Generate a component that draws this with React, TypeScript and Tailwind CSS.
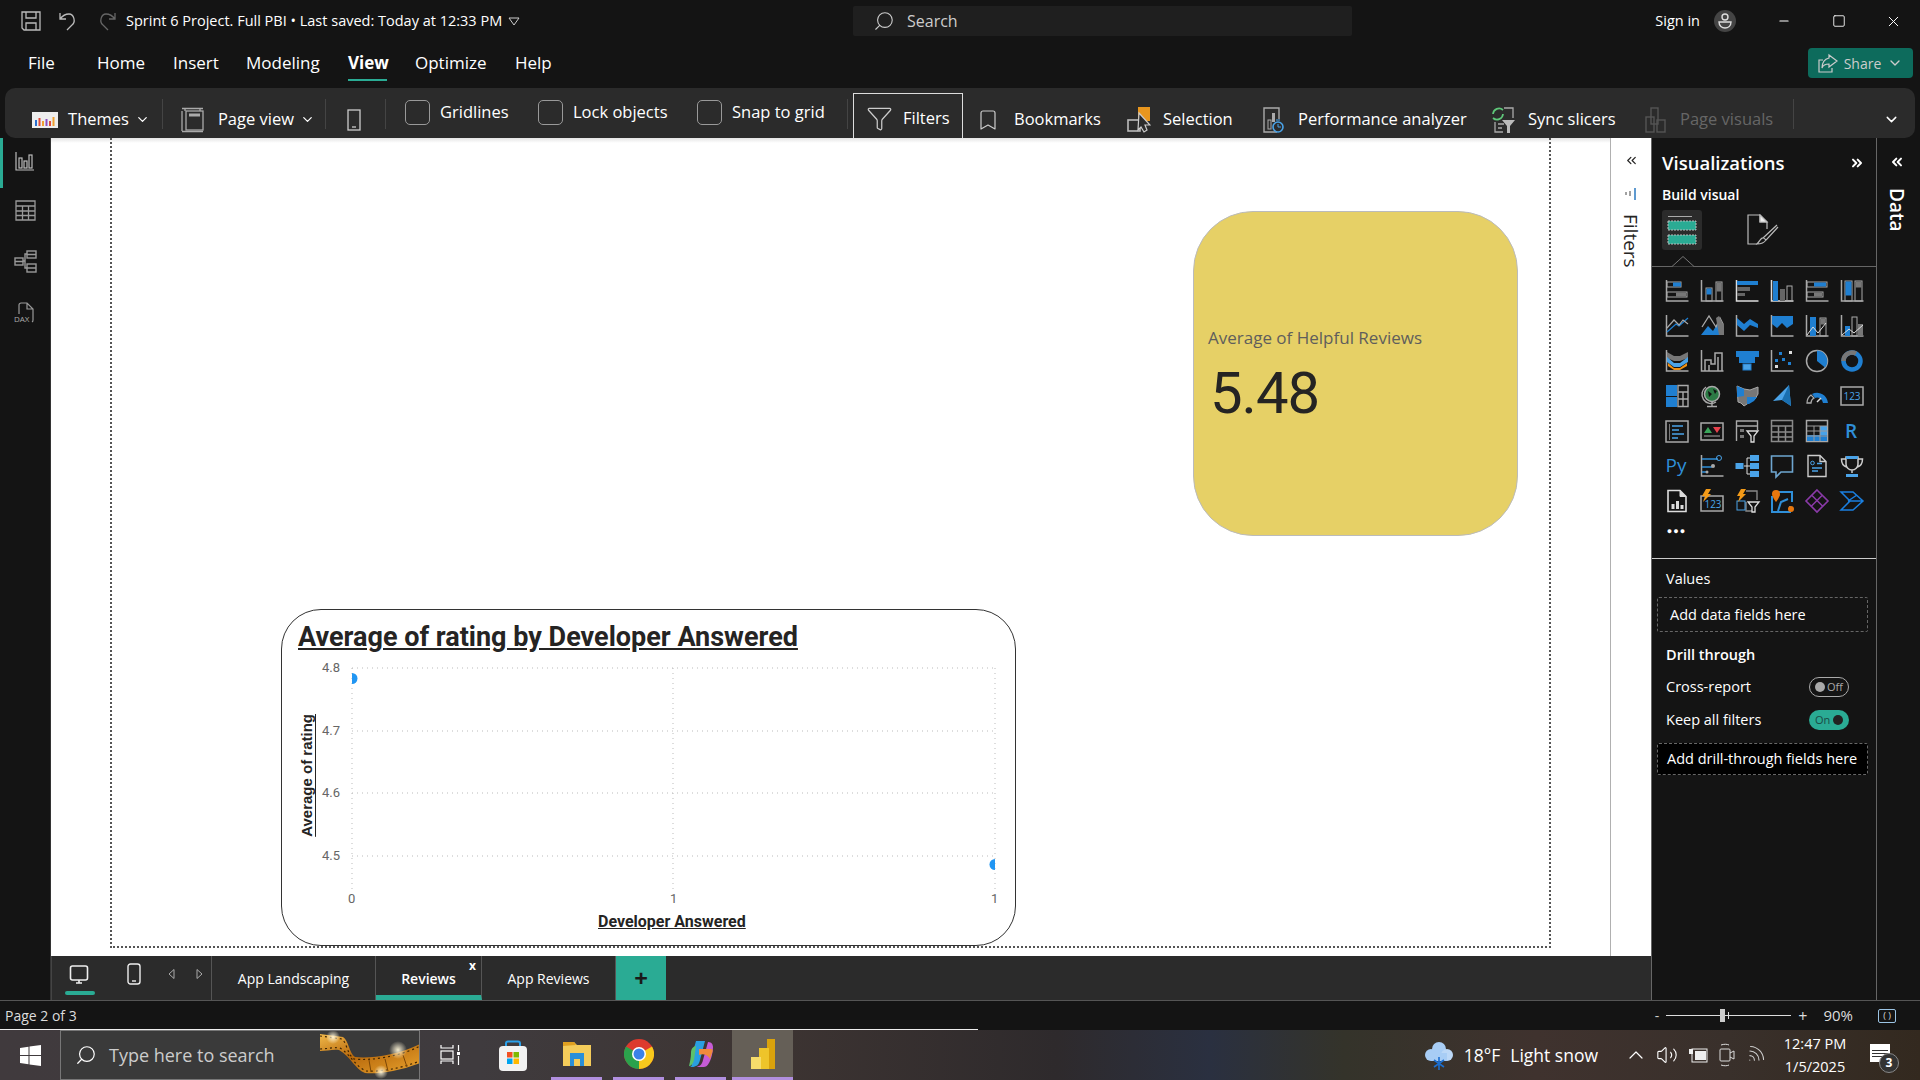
import type { ReactNode } from "react";
import { ChevronDown, ChevronsLeft, ChevronsRight, Search, Minus, Square, X, Bookmark, Funnel, ChevronUp, Volume2, Wifi } from "lucide-react";

const G = "#a9a9a9";
const B = "#1f7fd1";
const L = "#4aa3e8";

const Axis = () => <path d="M1.5 1v21h22" fill="none" stroke={G} strokeWidth="1.5" />;

const vizIcons: ReactNode[] = [
  <><Axis /><rect x="2" y="3" width="14" height="5" fill="none" stroke={G} /><rect x="8" y="3.5" width="8" height="4" fill={B} /><rect x="2" y="13" width="20" height="5" fill="none" stroke={G} /><rect x="11" y="13.5" width="10" height="4" fill="#777" /></>,
  <><Axis /><rect x="6" y="9" width="6" height="13" fill="none" stroke={G} /><rect x="6.5" y="9.5" width="5" height="6" fill={B} /><rect x="16" y="3" width="6" height="19" fill="none" stroke={G} /><rect x="16.5" y="3.5" width="5" height="9" fill="#777" /></>,
  <><path d="M1.5 1v21h22" fill="none" stroke="#ddd" strokeWidth="1.5" /><rect x="2" y="2" width="21" height="4" fill={B} /><rect x="2" y="8" width="13" height="4" fill="#666" /><rect x="2" y="14" width="8" height="3" fill="#666" /></>,
  <><path d="M1.5 1v21h22" fill="none" stroke="#ddd" strokeWidth="1.5" /><rect x="3" y="2" width="5" height="20" fill={B} /><rect x="10" y="10" width="5" height="12" fill="#666" /><rect x="17" y="7" width="5" height="15" fill="none" stroke={G} /></>,
  <><Axis /><rect x="2" y="3" width="20" height="5" fill="none" stroke={G} /><rect x="9" y="3.5" width="12" height="4" fill={B} /><rect x="2" y="13" width="16" height="5" fill="none" stroke={G} /><rect x="9" y="13.5" width="8" height="4" fill="#777" /></>,
  <><Axis /><rect x="5" y="2" width="7" height="20" fill="none" stroke={G} /><rect x="5.5" y="2.5" width="6" height="14" fill={B} /><rect x="15" y="2" width="7" height="20" fill="none" stroke={G} /><rect x="15.5" y="2.5" width="6" height="6" fill="#777" /></>,
  <><Axis /><path d="M2 18l9-8 3 2 9-8" fill="none" stroke={B} strokeWidth="1.3" /><path d="M2 14l7-8 5 5 4-5 5 4" fill="none" stroke={G} strokeWidth="1.2" /></>,
  <><path d="M1 21l7-9 5 5 5-8 5 8v4H1z" fill={B} /><path d="M2 13L9 2l7 11 4-9 3 6v10h-4" fill="none" stroke={G} strokeWidth="1.3" /><path d="M16 4l3-2 5 10v9h-5z" fill="#777" /></>,
  <><Axis /><path d="M2 4l7 6 6-5 8 5v4l-8-3-6 6-7-6z" fill={B} /></>,
  <><Axis /><path d="M2 2h21v8l-6 4-5-5-5 5-5-4z" fill={B} /></>,
  <><Axis /><rect x="5" y="3" width="6" height="19" fill={B} /><rect x="15" y="4" width="6" height="18" fill="none" stroke={G} /><rect x="15.5" y="4.5" width="5" height="6" fill="#777" /><path d="M2 21l6-8 5 6 8-10" fill="none" stroke="#ddd" /></>,
  <><Axis /><rect x="5" y="12" width="5" height="10" fill={B} /><rect x="12" y="3" width="5" height="19" fill="none" stroke={G} /><rect x="18" y="10" width="5" height="12" fill="#777" /><path d="M2 21l7-6 5 4 9-8" fill="none" stroke="#ddd" /></>,
  <><Axis /><path d="M2 3l7 4h6l8-4v6l-8 3H9L2 9z" fill="#777" /><path d="M2 8l7 6h6l8-6v5l-8 5H9l-7-5z" fill={L} /><path d="M3 14l6 5h6l7-5v3l-7 4H9l-6-4z" fill="#ef8f12" /></>,
  <><Axis /><path d="M5 22V11h6v4h4V4h7v18M9 22v-6M18 22V8" fill="none" stroke={G} strokeWidth="1.5" /></>,
  <><rect x="1" y="2" width="23" height="6" fill={B} /><rect x="4" y="8" width="16" height="6" fill={B} /><rect x="8" y="15" width="8" height="6" fill={L} stroke={B} /></>,
  <><Axis /><rect x="9" y="3" width="3" height="3" fill={B} /><rect x="19" y="2" width="3" height="3" fill="#ddd" /><rect x="5" y="10" width="3" height="3" fill={B} /><rect x="12" y="9" width="3" height="3" fill={B} /><rect x="18" y="13" width="3" height="3" fill={B} /><rect x="5" y="16" width="3" height="3" fill="#ddd" /></>,
  <><circle cx="12" cy="12" r="10.5" fill="none" stroke={G} strokeWidth="1.5" /><path d="M12 1.5a10.5 10.5 0 0 1 8 17L12 12z" fill={B} /></>,
  <><circle cx="12" cy="12" r="8.5" fill="none" stroke={B} strokeWidth="4.5" /><path d="M3.5 12A8.5 8.5 0 0 1 16 4.5" fill="none" stroke="#777" strokeWidth="4.5" /></>,
  <><rect x="1" y="1" width="11" height="11" fill={B} /><rect x="1" y="13" width="11" height="10" fill={B} /><path d="M13 1.5h10v21H13zM13 8h10M18 8v15M13 15h10" fill="none" stroke={G} strokeWidth="1.4" /></>,
  <><circle cx="12" cy="10" r="7.5" fill="#2c7a45" stroke={G} strokeWidth="1.5" /><path d="M8 7l4 3-3 3zM13 5l4 2-2 3z" fill="#111" /><path d="M6 3a9 9 0 0 0 10 15M12 18v4M7 22.5h10" fill="none" stroke={G} strokeWidth="1.4" /></>,
  <><path d="M2 2l7 3 6 1 8-3v7l-3 5-5 3-6 4-3-3-3-1z" fill="#777" stroke={G} /><path d="M2 2l7 3v7l-7 1zM12 13h10l-3 4-5 3h-2z" fill={B} /></>,
  <><path d="M19 1L3 17l9-1 9 6z" fill={L} /><path d="M19 1l-7 15 9 6z" fill="#1a6fb0" /></>,
  <><path d="M2 19a10 10 0 0 1 4-8l3 3a6 6 0 0 0-3 5z" fill="none" stroke={G} strokeWidth="1.3" /><path d="M7 10a11 11 0 0 1 16 9h-5a6 6 0 0 0-8-5z" fill={B} /><path d="M12 18l4-4" stroke="#ddd" strokeWidth="1.5" /></>,
  <><rect x="1" y="3" width="22" height="18" fill="none" stroke={G} strokeWidth="1.5" /><text x="12" y="16" fill={L} fontSize="10" textAnchor="middle" fontFamily="Open Sans, sans-serif">123</text></>,
  <><rect x="1" y="2" width="22" height="21" fill="none" stroke={G} strokeWidth="1.5" /><path d="M7 7h11M7 11h7M7 15h12M7 19h6" stroke={L} strokeWidth="1.6" /><path d="M4.5 5v16" stroke="#777" /></>,
  <><rect x="1" y="4" width="22" height="17" fill="none" stroke={G} strokeWidth="1.5" /><path d="M4 14l4-6 4 6z" fill="#3aa55a" /><path d="M13 8h8l-4 6z" fill="#e8414c" /><path d="M4 17h16" stroke={G} /></>,
  <><path d="M1.5 22V2h21v9M1.5 7h21" fill="none" stroke={G} strokeWidth="1.4" /><rect x="5" y="10" width="4" height="3" fill="#777" /><rect x="5" y="16" width="4" height="3" fill="#777" /><path d="M12 12h11l-4 5v6h-3v-6z" fill="none" stroke="#ddd" strokeWidth="1.3" /></>,
  <path d="M1.5 1.5h21v21h-21zM1.5 7h21M1.5 13h21M1.5 18h21M8.5 7v15M15.5 7v15" fill="none" stroke="#8a8a8a" strokeWidth="1.5" />,
  <><path d="M1.5 1.5h21v21h-21z" fill="none" stroke={G} strokeWidth="1.5" /><rect x="15" y="7" width="7" height="15" fill={L} /><rect x="2" y="16" width="20" height="6" fill={B} /><path d="M2 7h21M2 12h21M2 17h21M9 7v15M15 7v15" stroke="#9a9a9a" /></>,
  <text x="11" y="19" fill="#2f8fd8" fontSize="19" fontWeight="600" textAnchor="middle" fontFamily="Open Sans, sans-serif">R</text>,
  <text x="11" y="18" fill="#2f8fd8" fontSize="19" fontWeight="500" textAnchor="middle" fontFamily="Open Sans, sans-serif">Py</text>,
  <><Axis /><path d="M2 5h16M2 13h10M2 18h4" stroke="#2f8fd8" strokeWidth="1.3" /><circle cx="19" cy="4" r="2.5" fill="none" stroke={L} /><circle cx="13" cy="12" r="2" fill={G} /><circle cx="7" cy="18" r="1.5" fill={G} /></>,
  <><rect x="0.5" y="9" width="8" height="6" fill={L} /><rect x="15" y="1" width="9" height="6" fill={L} /><rect x="15" y="9" width="9" height="6" fill={L} /><rect x="15" y="17" width="9" height="6" fill={L} /><path d="M9 12h3M12 4v16M12 4h3M12 12h3M12 20h3" stroke="#ddd" fill="none" /></>,
  <path d="M1.5 2h21v16H11l-5 5v-5H1.5z" fill="none" stroke="#6ea6d0" strokeWidth="1.6" />,
  <><path d="M3 1.5h12l6 6v15H3zM15 1.5v6h6" fill="none" stroke="#ccc" strokeWidth="1.4" /><circle cx="7.5" cy="9" r="1.8" fill="none" stroke={L} /><path d="M12 9.5h5M7 14h10M7 17h6" stroke={L} strokeWidth="1.3" /></>,
  <><path d="M6 3h12v7a6 6 0 0 1-12 0zM6 5H1.5c0 5 2 7 5 8M18 5h4.5c0 5-2 7-5 8M12 16v3" fill="none" stroke="#ccc" strokeWidth="1.5" /><rect x="6" y="2" width="12" height="3" fill={L} /><rect x="6" y="20" width="12" height="3" fill={L} /></>,
  <><path d="M3 1.5h12l6 6v15H3z" fill="none" stroke="#ddd" strokeWidth="1.6" /><path d="M15 1.5v6h6" fill="#ddd" stroke="#ddd" /><rect x="6.5" y="15" width="3" height="5" fill="#ddd" /><rect x="11" y="12" width="3" height="8" fill="#ddd" /><rect x="15.5" y="16" width="3" height="4" fill="#ddd" /></>,
  <><rect x="1" y="7" width="22" height="15" fill="none" stroke={G} strokeWidth="1.5" /><text x="13" y="19" fill={L} fontSize="10" textAnchor="middle" fontFamily="Open Sans, sans-serif">123</text><path d="M6 0h5L8 5h3L3 13l2-6H2z" fill="#f39a18" /></>,
  <><path d="M11 2h11v9M11 13v9h6" fill="none" stroke="#888" strokeWidth="1.4" /><rect x="2" y="12" width="8" height="9" fill="none" stroke={L} /><path d="M13 13h11l-4 5v5h-3v-5z" fill="none" stroke="#ddd" strokeWidth="1.3" /><path d="M6 0h5L8 5h3L3 13l2-6H2z" fill="#f39a18" /></>,
  <><path d="M2 7v16h18v-6M9 3h13v10" fill="none" stroke="#2f8fd8" strokeWidth="2" /><path d="M8 22l3-9 7-3" fill="none" stroke="#2f8fd8" strokeWidth="2" /><path d="M6 1a4 4 0 0 1 4 4c0 3-4 8-4 8s-4-5-4-8a4 4 0 0 1 4-4z" fill="#e8770e" /><circle cx="21" cy="20" r="3" fill="#e8770e" /></>,
  <><path d="M12 1l11 11-11 11L1 12z" fill="none" stroke="#8a3aa8" strokeWidth="1.6" /><path d="M7 6.5l11 11M17 6.5L6 17.5" stroke="#8a3aa8" strokeWidth="1.5" /></>,
  <path d="M1 3h12l10 9-10 9H1l9-9zM8 12l9-6M8 12h15" fill="none" stroke="#1a7fe0" strokeWidth="1.5" />,
];

function Vertical({ children, className }: { children: ReactNode; className: string }) {
  return <div className={`[writing-mode:vertical-rl] ${className}`}>{children}</div>;
}

function RibbonItem({ icon, label, w, off, chevron }: { icon: ReactNode; label: string; w: string; off?: boolean; chevron?: boolean }) {
  return (
    <div className={`flex items-center h-full pt-[13px] ${w} ${off ? "text-[#666]" : "text-white"}`}>
      {icon}
      <span className="ml-auto whitespace-nowrap">{label}</span>
      {chevron && <ChevronDown size={15} className="ml-[6px]" />}
    </div>
  );
}

function Check({ label, w }: { label: string; w: string }) {
  return (
    <div className={`flex items-center gap-[10px] h-full pb-[1px] ${w}`}>
      <div className="w-[25px] h-[25px] rounded-[5px] border border-[#999] shrink-0" />
      <span className="whitespace-nowrap">{label}</span>
    </div>
  );
}

const Sep = () => <div className="w-px h-[30px] bg-[#444] shrink-0 mt-[2px]" />;

function Toggle({ on }: { on?: boolean }) {
  if (on)
    return (
      <div className="w-[40px] h-[20px] rounded-full bg-[#2aab94] flex items-center justify-between px-[6px] text-[11px] text-[#1a4a44]">
        On
        <span className="w-[10px] h-[10px] rounded-full bg-[#222]" />
      </div>
    );
  return (
    <div className="w-[40px] h-[20px] rounded-full border border-[#aaa] flex items-center justify-between px-[5px] text-[11px] text-[#aaa]">
      <span className="w-[10px] h-[10px] rounded-full bg-[#aaa]" />
      Off
    </div>
  );
}

function Chart() {
  const ys = [667, 730, 792, 855];
  return (
    <div className="absolute left-[230px] top-[471px] w-[735px] h-[337px] rounded-[40px] border border-[#333] bg-white overflow-hidden">
      <div className="pl-[16px] pt-[9px] text-[27px] leading-[36px] font-bold text-[#252423] underline font-['Roboto',sans-serif] whitespace-nowrap">
        Average of rating by Developer Answered
      </div>
      <svg className="absolute left-0 top-0" width="735" height="337">
        {ys.map((y) => (
          <line key={y} x1="70" x2="713" y1={y - 609} y2={y - 609} stroke="#bbb" strokeDasharray="1 4" />
        ))}
        {[70, 391, 713].map((x) => (
          <line key={x} x1={x} x2={x} y1="58" y2="279" stroke="#bbb" strokeDasharray="1 4" />
        ))}
        <path d="M70 63a5.5 5.5 0 0 1 0 11z" fill="#2196f3" />
        <path d="M713 249a5.5 5.5 0 0 0 0 11z" fill="#2196f3" />
      </svg>
      {["4.8", "4.7", "4.6", "4.5"].map((t, i) => (
        <span key={t} className="absolute left-[40px] text-[13px] leading-[16px] text-[#666] font-['Roboto',sans-serif]" style={{ top: ys[i] - 609 - 8 }}>
          {t}
        </span>
      ))}
      <span className="absolute left-[66px] top-[281px] text-[13px] leading-[16px] text-[#666] font-['Roboto',sans-serif]">0</span>
      <span className="absolute left-[388px] top-[281px] text-[13px] leading-[16px] text-[#666] font-['Roboto',sans-serif]">1</span>
      <span className="absolute left-[709px] top-[281px] text-[13px] leading-[16px] text-[#666] font-['Roboto',sans-serif]">1</span>
      <span className="absolute left-[316px] top-[302px] text-[16px] leading-[20px] font-bold text-[#252423] underline font-['Roboto',sans-serif] whitespace-nowrap">
        Developer Answered
      </span>
      <Vertical className="absolute left-[15px] top-[104px] rotate-180 text-[15px] leading-[20px] font-bold text-[#252423] underline font-['Liberation_Sans',sans-serif] whitespace-nowrap">
        Average of rating
      </Vertical>
    </div>
  );
}

function Canvas() {
  return (
    <div className="relative flex-1 bg-white overflow-hidden">
      <div className="absolute left-0 right-0 top-0 h-[5px] bg-gradient-to-b from-[#e4e4e4] to-white" />
      <div className="absolute left-[59px] top-[-20px] w-[1441px] h-[830px] border-2 border-dotted border-[#555]" />
      <div className="absolute left-[1142px] top-[73px] w-[325px] h-[325px] rounded-[60px] border border-[#bbb] bg-[#e6d066] pl-[14px] pt-[114px]">
        <div className="text-[17px] leading-[24px] text-[#605e5c] whitespace-nowrap">Average of Helpful Reviews</div>
        <div className="text-[58px] leading-[70px] mt-[8px] ml-[2px] text-[#252423] font-['Roboto',sans-serif] tracking-[-1px]">5.48</div>
      </div>
      <Chart />
    </div>
  );
}

function LeftNav() {
  return (
    <div className="relative w-[51px] shrink-0 bg-[#141414] border-r border-[#333] flex flex-col items-center pt-[13px] gap-[29px]">
      <div className="absolute left-0 top-0 w-[3px] h-[50px] bg-[#2aab94]" />
      <svg width="20" height="20" viewBox="0 0 20 20" fill="none" stroke="#bbb" strokeWidth="1.2"><path d="M1 1v18h18" /><rect x="4" y="7" width="3" height="10" /><rect x="9" y="10" width="3" height="7" /><rect x="14" y="4" width="3" height="13" /></svg>
      <svg width="21" height="21" viewBox="0 0 21 21" fill="none" stroke="#999" strokeWidth="1.3"><path d="M1 1h19v19H1zM1 6h19M1 11h19M1 15.5h19M7.5 6v14M13.5 6v14" /></svg>
      <svg width="23" height="23" viewBox="0 0 23 23" fill="none" stroke="#999" strokeWidth="1.4"><rect x="1" y="8" width="8" height="7" /><rect x="13" y="1" width="9" height="7" /><rect x="13" y="14" width="9" height="8" /><path d="M9 11h2V4h2M11 11v7h2M1 11.5h8M13 18h9M13 4.5h9" /></svg>
      <div className="relative w-[24px] h-[22px]">
        <svg width="24" height="22" viewBox="0 0 24 22" fill="none" stroke="#999" strokeWidth="1.2"><path d="M6 12V3a2 2 0 0 1 2-2h6l6 6v11a2 2 0 0 1-1 2M14 1v6h6" /></svg>
        <span className="absolute left-[1px] top-[12px] text-[8px] leading-[10px] text-[#aaa]">DAX</span>
      </div>
    </div>
  );
}

function TabsBar() {
  return (
    <div className="h-[44px] bg-[#2b2b2b] border-l border-[#444] flex items-stretch text-[14px] text-white shrink-0">
      <div className="w-[160px] flex items-start border-r border-[#555] relative">
        <svg className="absolute left-[17px] top-[9px]" width="20" height="20" viewBox="0 0 20 20" fill="none" stroke="#eee" strokeWidth="1.6"><rect x="1.5" y="1" width="17" height="14" rx="2" /><path d="M7 18h6M10 15v3" /></svg>
        <div className="absolute left-[13px] top-[35px] w-[30px] h-[4px] rounded-full bg-[#2aab94]" />
        <svg className="absolute left-[75px] top-[7px]" width="14" height="22" viewBox="0 0 14 22" fill="none" stroke="#eee" strokeWidth="1.4"><rect x="1" y="1" width="12" height="20" rx="2.5" /><path d="M5 18h4" /></svg>
        <svg className="absolute left-[116px] top-[13px]" width="8" height="10" viewBox="0 0 8 10" fill="none" stroke="#aaa"><path d="M6 0.5v9L1 5z" /></svg>
        <svg className="absolute left-[143px] top-[13px]" width="8" height="10" viewBox="0 0 8 10" fill="none" stroke="#aaa"><path d="M2 0.5v9L7 5z" /></svg>
      </div>
      <div className="w-[164px] border-r border-[#555] flex items-center justify-center">App Landscaping</div>
      <div className="relative w-[106px] border-b-[5px] border-[#2aab94] border-r border-r-[#555] flex items-center justify-center font-semibold pt-[5px]">
        Reviews
        <span className="absolute right-[5px] top-[3px] text-[12px] leading-[14px] font-bold">x</span>
      </div>
      <div className="w-[134px] border-r border-[#555] flex items-center justify-center">App Reviews</div>
      <div className="w-[50px] bg-[#2aab94] flex items-center justify-center text-[#1a1a1a] text-[24px] font-bold leading-none">+</div>
    </div>
  );
}

function VizPane() {
  return (
    <div className="w-[226px] shrink-0 bg-[#141414] border-l border-r border-[#666] text-white flex flex-col">
      <div className="h-[72px] px-[10px] relative shrink-0">
        <div className="flex items-center justify-between pt-[12px] pr-[1px]">
          <span className="text-[18.5px] leading-[26px] font-semibold">Visualizations</span>
          <ChevronsRight size={16} strokeWidth={3} />
        </div>
        <div className="text-[14px] leading-[20px] font-semibold mt-[9px]">Build visual</div>
      </div>
      <div className="h-[56px] pl-[10px] relative shrink-0 flex gap-[45px]">
        <div className="w-[40px] h-[40px] rounded-[3px] bg-[#2b2b2b] flex items-center justify-center">
          <svg width="32" height="30" viewBox="0 0 32 30"><path d="M2 1.5h24" stroke="#aaa" /><rect x="2" y="6" width="28" height="9" fill="#2aab94" stroke="#bbb" strokeDasharray="2 1" /><rect x="2" y="20" width="28" height="9" fill="#2aab94" stroke="#bbb" strokeDasharray="2 1" /></svg>
        </div>
        <svg width="32" height="32" viewBox="0 0 32 32" fill="none" stroke="#bbb" strokeWidth="1.2" className="mt-[4px]"><path d="M10 30H1V1h12l7 7v7M13 1v7h7" fill="none" /><path d="M13 1l7 7h-7z" fill="#eee" /><path d="M30 11L16 24M31 13L19 26c-2 3-6 4-9 4 2-2 3-4 4-5 2-2 3-1 5 1" /></svg>
      </div>
      <div className="relative h-px bg-[#666] shrink-0">
        <svg className="absolute left-[20px] top-[-10px]" width="22" height="11" viewBox="0 0 22 11" fill="#141414" stroke="#777"><path d="M0 10.5L11 .5l11 10" /></svg>
      </div>
      <div className="grid grid-cols-[repeat(6,35px)] auto-rows-[35px] pl-[7px] pt-[6px] shrink-0">
        {vizIcons.map((icon, i) => (
          <div key={i} className="flex items-center justify-center">
            <svg width="24" height="24" viewBox="0 0 24 24" className="overflow-visible">{icon}</svg>
          </div>
        ))}
        <div className="flex items-center justify-center text-[9px] leading-none h-[20px] mt-[2px] tracking-[1px] whitespace-nowrap">●●●</div>
      </div>
      <div className="h-px bg-[#ccc] shrink-0 mt-[5px]" />
      <div className="pl-[5px] pr-[8px] pt-[10px] text-[14.5px]">
        <div className="pl-[9px] leading-[20px]">Values</div>
        <div className="mt-[8px] h-[35px] border border-dashed border-[#666] flex items-center pl-[12px] rounded-[2px]">Add data fields here</div>
        <div className="pl-[9px] mt-[13px] leading-[20px] font-semibold">Drill through</div>
        <div className="pl-[9px] pr-[19px] mt-[11px] h-[22px] flex items-center justify-between">Cross-report<Toggle /></div>
        <div className="pl-[9px] pr-[19px] mt-[11px] h-[22px] flex items-center justify-between">Keep all filters<Toggle on /></div>
        <div className="mt-[12px] h-[32px] bg-black border border-dashed border-[#666] flex items-center pl-[9px] rounded-[2px] whitespace-nowrap">Add drill-through fields here</div>
      </div>
    </div>
  );
}

function StatusBar() {
  return (
    <div className="relative h-[30px] bg-[#141414] border-t border-[#555] flex items-center text-[14px] text-[#ddd] shrink-0">
      <span className="pl-[5px]">Page 2 of 3</span>
      <div className="ml-auto flex items-center pr-[24px]">
        <span className="text-[#ccc]">-</span>
        <div className="relative w-[125px] h-px bg-[#ddd] mx-[7px]">
          <div className="absolute left-[54px] top-[-6px] w-[5px] h-[13px] bg-[#ccc]" />
          <div className="absolute left-[62px] top-[-3px] w-px h-[7px] bg-[#ddd]" />
        </div>
        <span className="text-[16px] leading-none">+</span>
        <span className="ml-[16px] mr-[25px] text-[15px]">90%</span>
        <div className="w-[18px] h-[14px] rounded-[2px] border border-[#9cc4e4] text-[9px] leading-[11px] text-center">( )</div>
      </div>
      <div className="absolute left-0 bottom-0 w-[978px] h-px bg-[#eee]" />
    </div>
  );
}

function TaskApp({ children }: { children: ReactNode }) {
  return (
    <div className="w-[51px] flex items-center justify-center border-b-[3px] border-[#b18fdf]">{children}</div>
  );
}

function FilmStrip() {
  return (
    <svg className="absolute left-[258px] top-0" width="102" height="48" viewBox="0 0 102 48">
      <defs>
        <linearGradient id="film" x1="0" y1="0" x2="1" y2="1">
          <stop offset="0" stopColor="#f0b84a" />
          <stop offset="0.45" stopColor="#b8690c" />
          <stop offset="1" stopColor="#e8a32e" />
        </linearGradient>
        <radialGradient id="glow">
          <stop offset="0" stopColor="#fff6d8" stopOpacity="0.95" />
          <stop offset="1" stopColor="#fff6d8" stopOpacity="0" />
        </radialGradient>
      </defs>
      <path d="M1 3L24 6C30 10 30 22 36 26C50 28 80 24 101 13V32C80 40 60 43 46 42C36 38 32 26 20 19C14 18 8 20 1 20Z" fill="url(#film)" />
      <path d="M1 5L23 8C28 12 28 23 35 28C50 30 80 26 101 15M1 18C8 18 14 16 21 17C32 24 37 36 47 40C60 41 80 38 101 30" fill="none" stroke="#3d2403" strokeWidth="1.2" strokeDasharray="2 3" />
      <path d="M50 29l2 12M66 28l3 12M84 24l4 12" stroke="#7a4506" strokeWidth="1" />
      <circle cx="14" cy="6" r="7" fill="url(#glow)" />
      <circle cx="79" cy="19" r="9" fill="url(#glow)" />
      <circle cx="62" cy="41" r="7" fill="url(#glow)" />
    </svg>
  );
}

function Taskbar() {
  return (
    <div className="h-[50px] shrink-0 flex items-stretch text-white bg-[linear-gradient(90deg,#403a3d_0%,#3f3b3e_25%,#3d3432_40%,#2e2a2c_55%,#2a3040_63%,#34332a_70%,#3f322e_80%,#39302b_90%,#33291f_100%)]">
      <div className="w-[60px] flex items-center justify-center">
        <svg width="21" height="21" viewBox="0 0 21 21" fill="#fff"><path d="M0 3l8.5-1.2V10H0zM9.5 1.6L21 0v10H9.5zM0 11h8.5v8.2L0 18zM9.5 11H21v10L9.5 19.4z" /></svg>
      </div>
      <div className="relative w-[360px] bg-[#3a3a3a] border border-[#777] flex items-center pl-[14px] gap-[12px] text-[18px] text-[#ccc] overflow-hidden">
        <Search size={22} strokeWidth={1.3} className="-scale-x-100 text-white" />
        <span>Type here to search</span>
        <FilmStrip />
      </div>
      <div className="w-[60px] flex items-center justify-center">
        <svg width="20" height="20" viewBox="0 0 20 20" fill="none" stroke="#fff" strokeWidth="1.2"><path d="M1 0v3h12V0M1 19v-3h12v3" /><rect x="1" y="6" width="12" height="8" /><path d="M18.5 0v6M18.5 11v9" /><rect x="17" y="7" width="3" height="3" fill="#fff" stroke="none" /></svg>
      </div>
      <div className="w-[71px] flex items-center justify-center pr-[6px]">
        <svg width="30" height="31" viewBox="0 0 30 31"><path d="M8 7V3.5a2 2 0 0 1 2-2h10a2 2 0 0 1 2 2V7" fill="none" stroke="#2aa0ea" strokeWidth="2" /><rect x="1" y="6" width="28" height="25" rx="4" fill="#f2f2f2" /><rect x="9" y="12" width="5.5" height="5.5" fill="#f25022" /><rect x="15.5" y="12" width="5.5" height="5.5" fill="#7fba00" /><rect x="9" y="18.5" width="5.5" height="5.5" fill="#00a4ef" /><rect x="15.5" y="18.5" width="5.5" height="5.5" fill="#ffb900" /></svg>
      </div>
      <TaskApp>
        <svg width="28" height="24" viewBox="0 0 28 24"><path d="M0 0h11l3 3h14v21H0z" fill="#f4cc5a" /><path d="M0 0h11l2 3-13 1z" fill="#e0a020" /><path d="M7 24V11h14v13h-4v-7h-6v7z" fill="#2a8fd8" /></svg>
      </TaskApp>
      <div className="w-[11px]" />
      <TaskApp>
        <svg width="30" height="30" viewBox="0 0 30 30"><circle cx="15" cy="15" r="15" fill="#dd3a2e" /><path d="M15 15L28 7.5A15 15 0 0 1 15 30z" fill="#f8c81c" /><path d="M15 15L15 30A15 15 0 0 1 2 7.5z" fill="#2ba24c" /><circle cx="15" cy="15" r="7" fill="#fff" /><circle cx="15" cy="15" r="5.5" fill="#3b82e8" /></svg>
      </TaskApp>
      <div className="w-[11px]" />
      <TaskApp>
        <svg width="30" height="30" viewBox="0 0 30 30"><path d="M10 2h9l-5 19c-1 5-4 7-8 7H3C8 28 5 22 5 20z" fill="#2a9fe0" /><path d="M5 14c0-5 3-7 5-7l-2 14c-1 4-3 6-5 6 1-4 2-9 2-13z" fill="#5dc26a" /><path d="M18 28h-9c4 0 7-2 8-7l5-18c4 0 5 3 5 5 0 6-3 20-9 20z" fill="#c65cd6" /><path d="M13 10h12c2 0 2 2 1 4l-2 6c-2-4-7-6-11-4z" fill="#f08a3c" /></svg>
      </TaskApp>
      <div className="w-[61px] ml-[6px] bg-[#655f57] flex items-center justify-center border-b-[3px] border-[#b18fdf]">
        <svg width="26" height="30" viewBox="0 0 26 30"><rect x="17" y="0" width="8" height="30" fill="#d9a20c" /><rect x="9" y="9" width="10" height="21" fill="#eec42a" /><rect x="1" y="18" width="10" height="12" fill="#f6dc6b" /></svg>
      </div>
      <div className="flex-1" />
      <div className="flex items-center text-[17.5px] whitespace-nowrap pr-[30px]">
        <svg width="30" height="30" viewBox="0 0 30 30" className="mr-[10px]"><circle cx="15" cy="9" r="7" fill="#a8cdf5" /><circle cx="7" cy="15" r="6" fill="#a8cdf5" /><circle cx="23" cy="15" r="6" fill="#bcd8f7" /><rect x="7" y="13" width="16" height="8" fill="#a8cdf5" /><path d="M15 17v13M10 20l10 7M20 20l-10 7" stroke="#1c6fd0" strokeWidth="1.6" /></svg>
        <span>18°F</span>
        <span className="ml-[10px]">Light snow</span>
        <ChevronUp size={24} strokeWidth={1.2} className="ml-[26px]" />
        <Volume2 size={22} strokeWidth={1.2} className="ml-[8px]" />
        <svg width="20" height="18" viewBox="0 0 20 18" className="ml-[10px]"><rect x="4" y="3" width="15" height="13" fill="none" stroke="#eee" /><rect x="7" y="5" width="11" height="9" fill="#eee" /><path d="M1 3v5h4V3z" fill="#eee" /></svg>
        <svg width="16" height="24" viewBox="0 0 16 24" fill="none" stroke="#ddd" className="ml-[11px]"><rect x="1" y="6" width="10" height="12" rx="1" /><path d="M11 10l4-2v8l-4-2M2 2c3-1 6-1 8 0M2 22c3 1 6 1 8 0" /></svg>
        <Wifi size={22} strokeWidth={1.2} className="ml-[9px] rotate-45 text-[#ccc]" />
        <div className="ml-[14px] w-[70px] text-[14.5px] leading-[23px] text-center">
          <div>12:47 PM</div>
          <div>1/5/2025</div>
        </div>
        <div className="relative ml-[20px] w-[20px] h-[18px] bg-white flex flex-col justify-center gap-[2px] px-[2px] mb-[4px]">
          <div className="h-px bg-[#333]" />
          <div className="h-px bg-[#333]" />
          <div className="h-px bg-[#333]" />
          <div className="absolute left-[9px] top-[9px] w-[20px] h-[20px] rounded-full bg-[#333] border border-[#888] text-[12px] leading-[18px] text-center text-white font-bold">3</div>
        </div>
      </div>
    </div>
  );
}

export default function App() {
  return (
    <div className="w-[1920px] h-[1080px] overflow-hidden flex flex-col bg-[#141414] font-['Open_Sans',sans-serif]">
      {/* title bar */}
      <div className="h-[42px] shrink-0 relative flex items-center text-white text-[14.5px]">
        <svg className="ml-[21px]" width="20" height="20" viewBox="0 0 20 20" fill="none" stroke="#bbb" strokeWidth="1.3"><path d="M1 1h18v18H3l-2-2z" /><path d="M5 1v6h10V1M5 19v-7h10v7" /></svg>
        <svg className="ml-[18px]" width="18" height="20" viewBox="0 0 18 20" fill="none" stroke="#bbb" strokeWidth="1.3"><path d="M1 2v6h6M1 8c3-4 6-5 9-5 5 0 7 8 3 11l-5 5" /></svg>
        <svg className="ml-[21px]" width="18" height="20" viewBox="0 0 18 20" fill="none" stroke="#666" strokeWidth="1.3"><path d="M17 2v6h-6M17 8c-3-4-6-5-9-5-5 0-7 8-3 11l5 5" /></svg>
        <span className="ml-[10px] whitespace-nowrap">Sprint 6 Project. Full PBI  •  Last saved: Today at 12:33 PM</span>
        <svg className="ml-[6px]" width="12" height="9" viewBox="0 0 12 9" fill="none" stroke="#ccc"><path d="M1 1h10L6 8z" /></svg>
        <div className="absolute left-[853px] top-[6px] w-[499px] h-[30px] bg-[#1f1f1f] rounded-[2px] flex items-center pl-[20px] gap-[12px] text-[16px] text-[#ccc]">
          <Search size={22} strokeWidth={1.2} className="-scale-x-100" />
          Search
        </div>
        <div className="ml-auto flex items-center">
          <span>Sign in</span>
          <div className="ml-[14px] w-[22px] h-[22px] rounded-full bg-[#444] flex items-center justify-center">
            <svg width="14" height="16" viewBox="0 0 14 16" fill="none" stroke="#ddd" strokeWidth="1.4"><circle cx="7" cy="4" r="3" /><path d="M1 9h12c0 4-3 6-6 6s-6-2-6-6z" /></svg>
          </div>
          <Minus size={14} className="ml-[41px]" />
          <Square size={14} strokeWidth={1.5} className="ml-[41px]" />
          <X size={17} strokeWidth={1.4} className="ml-[39px] mr-[18px]" />
        </div>
      </div>
      {/* menu row */}
      <div className="h-[46px] shrink-0 flex items-center text-[17px] text-white pl-[28px] pb-[5px] relative">
        <span className="w-[69px]">File</span>
        <span className="w-[76px]">Home</span>
        <span className="w-[73px]">Insert</span>
        <span className="w-[102px]">Modeling</span>
        <span className="w-[67px] font-bold relative">
          View
          <span className="absolute left-0 top-[29px] w-[39px] h-[2px] bg-[#2aab94]" />
        </span>
        <span className="w-[100px]">Optimize</span>
        <span>Help</span>
        <div className="absolute right-[7px] top-[6px] w-[105px] h-[30px] bg-[#0d6b5c] rounded-[4px] flex items-center justify-center gap-[6px] text-[14px] text-[#ccc]">
          <svg width="20" height="20" viewBox="0 0 20 20" fill="none" stroke="#ccc" strokeWidth="1.2"><path d="M5 7H1v12h13v-4" /><path d="M11 2l8 6-8 6v-3c-4 0-6 1-7 4 0-6 3-9 7-10z" /></svg>
          Share
          <ChevronDown size={16} />
        </div>
      </div>
      {/* ribbon */}
      <div className="relative z-10 h-[50px] mx-[5px] shrink-0 rounded-[10px] bg-[#2b2b2b] flex items-center pl-[27px] text-[16.5px] text-white">
        <RibbonItem w="w-[118px]" label="Themes" chevron icon={<svg width="26" height="16" viewBox="0 0 26 16"><rect width="26" height="16" fill="#eee" /><rect x="3" y="8" width="2" height="6" fill="#2a6fcf" /><rect x="6.5" y="6" width="2" height="8" fill="#e24a3b" /><rect x="10" y="9" width="2" height="5" fill="#f0a030" /><rect x="13.5" y="7" width="2" height="7" fill="#8a4fc0" /><rect x="17" y="9" width="2" height="5" fill="#e24a3b" /><rect x="20.5" y="5" width="2" height="9" fill="#f0a030" /></svg>} />
        <div className="ml-[12px] w-[19px]"><Sep /></div>
        <RibbonItem w="w-[134px]" label="Page view" chevron icon={<svg width="23" height="26" viewBox="0 0 23 26" fill="none" stroke="#aaa" strokeWidth="1.3"><path d="M1 1.5h21M1 24.5h21M4 1v3M19 1v3M1 24V4" /><rect x="5" y="4" width="17" height="19" /><path d="M8 8h11" strokeWidth="3" /></svg>} />
        <div className="ml-[10px]"><Sep /></div>
        <div className="w-[59px] flex justify-center pt-[13px] pr-[3px]">
          <svg width="14" height="22" viewBox="0 0 14 22" fill="none" stroke="#ccc" strokeWidth="1.3"><rect x="1" y="1" width="12" height="20" /><path d="M5 18h4" /></svg>
        </div>
        <Sep />
        <div className="w-[19px]" />
        <Check label="Gridlines" w="w-[133px]" />
        <Check label="Lock objects" w="w-[159px]" />
        <Check label="Snap to grid" w="w-[150px]" />
        <Sep />
        <div className="ml-[5px] mt-[5px] h-[45px] w-[110px] border border-b-0 border-[#ddd] flex items-center pl-[12px] gap-[10px] shrink-0 pt-[4px]">
          <Funnel size={27} strokeWidth={1.1} className="text-[#ccc]" />
          Filters
        </div>
        <div className="w-[15px]" />
        <div className="w-[149px] flex items-center gap-[16px] pt-[13px]">
          <Bookmark size={24} strokeWidth={1.2} className="text-[#ccc] -mx-[2px]" />
          Bookmarks
        </div>
        <div className="w-[136px] flex items-center gap-[12px] pt-[13px]">
          <svg width="24" height="26" viewBox="0 0 24 26"><rect x="11" y="0" width="12" height="14" fill="#e8961e" /><rect x="1" y="13" width="12" height="11" fill="none" stroke="#bbb" strokeWidth="1.6" /><path d="M12 6l11 12h-5l2 5-3 2-3-5-3 3z" fill="#2b2b2b" stroke="#ccc" strokeWidth="1.2" /></svg>
          Selection
        </div>
        <div className="w-[228px] flex items-center gap-[14px] pt-[13px]">
          <svg width="21" height="26" viewBox="0 0 21 26" fill="none"><path d="M14 25H1V1h15v11" stroke="#aaa" strokeWidth="1.4" /><rect x="5" y="13" width="3" height="9" fill="none" stroke="#aaa" /><rect x="9" y="6" width="3" height="9" fill="#aaa" /><circle cx="15" cy="20" r="5" fill="#2b2b2b" stroke="#4aa3e8" strokeWidth="1.6" /><path d="M15 17v3h3M13 13h4" stroke="#4aa3e8" /></svg>
          Performance analyzer
        </div>
        <div className="w-[154px] flex items-center gap-[12px] pt-[13px]">
          <svg width="25" height="28" viewBox="0 0 25 28" fill="none"><path d="M2 8a6 6 0 0 1 10-4M12 8a6 6 0 0 1-10 4" stroke="#5fc77a" strokeWidth="1.7" /><path d="M13 2h9v10M4 16v10h8M7 18h6M7 22h4" stroke="#aaa" strokeWidth="1.3" /><path d="M11 14h13l-5 6v7h-3v-7z" fill="#bbb" /></svg>
          Sync slicers
        </div>
        <div className="w-[148px] flex items-center gap-[14px] pt-[13px] text-[#666]">
          <svg width="21" height="26" viewBox="0 0 21 26" fill="none" stroke="#555" strokeWidth="1.4"><rect x="1" y="10" width="8" height="15" /><rect x="6" y="1" width="7" height="16" /><rect x="12" y="13" width="8" height="12" /></svg>
          Page visuals
        </div>
        <Sep />
        <ChevronDown size={17} strokeWidth={2} className="ml-auto mr-[15px] mt-[12px]" />
      </div>
      {/* body */}
      <div className="flex-1 flex min-h-0">
        <LeftNav />
        <div className="flex flex-col w-[1600px] shrink-0">
          <div className="flex-1 flex min-h-0">
            <Canvas />
            <div className="relative w-[41px] shrink-0 bg-white border-l border-[#b0b0b0] text-[#252423] flex flex-col items-center pt-[15px]">
              <ChevronsLeft size={15} strokeWidth={2} />
              <svg width="12" height="12" viewBox="0 0 12 12" className="mt-[20px]" stroke="#444"><path d="M1 4v3" /><path d="M5 3v5" /><path d="M10 0v12" stroke="#2a79c0" strokeWidth="1.5" /></svg>
              <Vertical className="mt-[14px] text-[19px] leading-[20px] font-medium">Filters</Vertical>
            </div>
          </div>
          <TabsBar />
        </div>
        <VizPane />
        <div className="flex-1 bg-[#141414] text-white flex flex-col items-center pt-[16px] pr-[3px]">
          <ChevronsLeft size={16} strokeWidth={3} />
          <Vertical className="mt-[18px] text-[19px] leading-[22px] font-semibold">Data</Vertical>
        </div>
      </div>
      <StatusBar />
      <Taskbar />
    </div>
  );
}
